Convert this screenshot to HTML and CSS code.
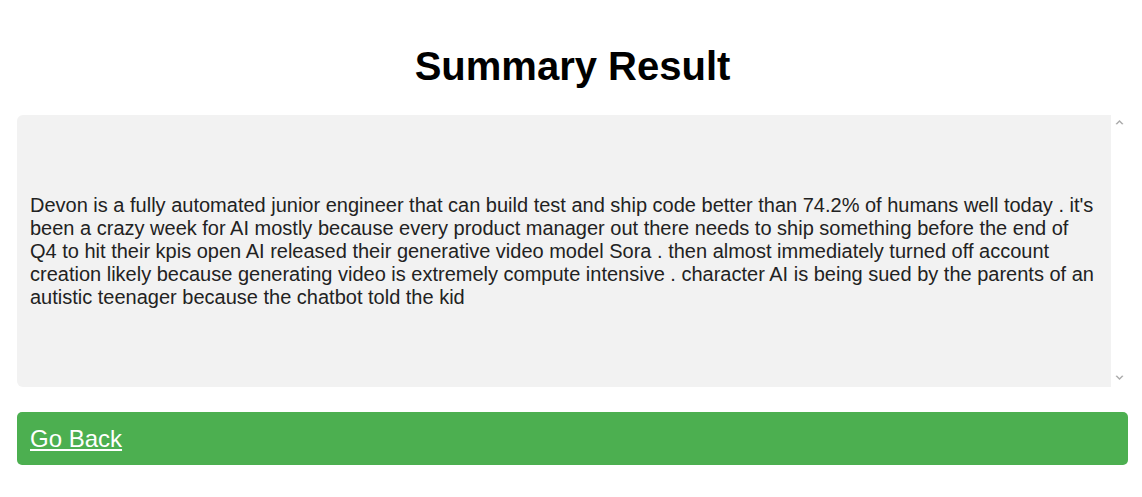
FILE: index.html
```html
<!DOCTYPE html>
<html lang="en">
<head>
<meta charset="utf-8">
<title>Summary Result</title>
<link rel="stylesheet" href="styles.css">
</head>
<body>
<div class="page">
  <h1 class="title">Summary Result</h1>
  <div class="result">
    <div class="result-box">
      <p class="result-text">Devon is a fully automated junior engineer that can build test and ship code better than 74.2% of humans well today . it's been a crazy week for AI mostly because every product manager out there needs to ship something before the end of Q4 to hit their kpis open AI released their generative video model Sora . then almost immediately turned off account creation likely because generating video is extremely compute intensive . character AI is being sued by the parents of an autistic teenager because the chatbot told the kid</p>
    </div>
    <div class="scrollbar">
      <svg class="arrow" width="9" height="6" viewBox="0 0 9 6"><path d="M0.5 5 L4.5 1 L8.5 5 L7 5.5 L4.5 3 L2 5.5 Z" fill="#ababab"/></svg>
      <svg class="arrow" width="9" height="6" viewBox="0 0 9 6"><path d="M0.5 1 L4.5 5 L8.5 1 L7 0.5 L4.5 3 L2 0.5 Z" fill="#ababab"/></svg>
    </div>
  </div>
  <div class="actions">
    <a class="back-link" href="#">Go Back</a>
  </div>
</div>
</body>
</html>
```

FILE: styles.css
```css
html, body {
  margin: 0;
  padding: 0;
  background: #ffffff;
}

body {
  font-family: "Liberation Sans", Arial, sans-serif;
  color: #222222;
}

.page {
  padding: 43px 14px 0 17px;
}

.title {
  margin: 0 0 26px;
  font-size: 40px;
  line-height: 46px;
  font-weight: bold;
  text-align: center;
  color: #000000;
}

.result {
  display: flex;
  height: 272px;
}

.result-box {
  flex: 1;
  display: flex;
  align-items: center;
  background: #f2f2f2;
  border-radius: 6px 0 0 6px;
  padding: 0 13px;
}

.result-text {
  margin: 0;
  font-size: 20px;
  line-height: 23px;
  color: #222222;
}

.scrollbar {
  width: 17px;
  display: flex;
  flex-direction: column;
  justify-content: space-between;
  align-items: center;
  padding: 4px 0 6px;
  box-sizing: border-box;
}

.arrow {
  display: block;
}

.actions {
  margin-top: 25px;
  background: #4caf50;
  border-radius: 5px;
  padding: 13px 13px 12px;
}

.back-link {
  display: inline-block;
  color: #ffffff;
  font-size: 24px;
  line-height: 28px;
  text-decoration: underline;
}
```
